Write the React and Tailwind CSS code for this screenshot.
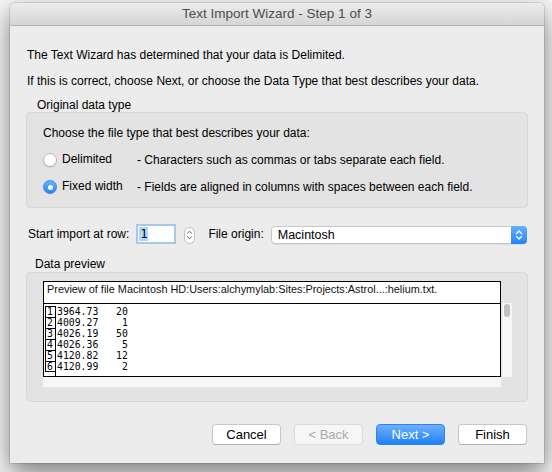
export default function App() {
  const rows = [
    ["1", "3964.73   20"],
    ["2", "4009.27    1"],
    ["3", "4026.19   50"],
    ["4", "4026.36    5"],
    ["5", "4120.82   12"],
    ["6", "4120.99    2"],
  ];
  return (
    <div className="w-[552px] h-[472px] bg-[#f6f6f6] overflow-hidden pt-[3px] pl-[10px] font-['Liberation_Sans',Arial,sans-serif] text-black">
      <div className="w-[534px] h-[460px] bg-[#ececec] rounded-t-[5px] shadow-[0_0_0_1px_rgba(0,0,0,0.1),0_10px_26px_rgba(0,0,0,0.5)] flex flex-col">
        <div className="h-[23px] shrink-0 rounded-t-[5px] bg-linear-to-b from-[#ececec] to-[#d5d5d5] border-b border-[#b3b3b3] flex items-center justify-center text-[13.5px] text-[#4d4d4d] pt-[1px]">
          Text Import Wizard - Step 1 of 3
        </div>
        <div className="px-[16px] flex flex-col text-[12px]">
          <div className="mt-[22px] leading-[15px] pl-[1px]">The Text Wizard has determined that your data is Delimited.</div>
          <div className="mt-[11px] leading-[15px] pl-[1px]">If this is correct, choose Next, or choose the Data Type that best describes your data.</div>
          <div className="mt-[9px] leading-[14px] ml-[11px]">Original data type</div>
          <div className="h-[96px] bg-[#e3e3e3] border border-[#d8d8d8] rounded-[4px] pt-[13px] pl-[16px]">
            <div className="leading-[15px]">Choose the file type that best describes your data:</div>
            <div className="mt-[10px] h-[18px] flex items-center">
              <div className="w-[94px] flex items-center">
                <div className="w-[14px] h-[14px] rounded-full bg-white border border-[#b4b4b4] shadow-[0_1px_1px_rgba(0,0,0,0.08)]"></div>
                <span className="ml-[5px] leading-[15px] -mt-[2px]">Delimited</span>
              </div>
              <span className="leading-[15px]">- Characters such as commas or tabs separate each field.</span>
            </div>
            <div className="mt-[9px] h-[18px] flex items-center">
              <div className="w-[94px] flex items-center">
                <div className="w-[14px] h-[14px] rounded-full bg-linear-to-b from-[#6cb2fb] to-[#1f86fb] border border-[#3a8ae8] flex items-center justify-center">
                  <div className="w-[5px] h-[5px] rounded-full bg-white"></div>
                </div>
                <span className="ml-[5px] leading-[15px] -mt-[2px]">Fixed width</span>
              </div>
              <span className="leading-[15px]">- Fields are aligned in columns with spaces between each field.</span>
            </div>
          </div>

          <div className="mt-[16px] h-[20px] flex items-center pl-[2px]">
            <span className="leading-[15px] mt-[1px]">Start import at row:</span>
            <div className="ml-[7px] w-[40px] h-[20px] bg-white border-[2px] border-[#a6c8ef] flex items-center pl-[1px]">
              <span className="bg-[#b4d5fe] px-[1px] h-[14px] leading-[14px] font-['DejaVu_Sans_Mono',monospace] text-[11.5px]">1</span>
            </div>
            <div className="ml-[8px] mt-[2px] w-[11px] h-[17px] bg-white border border-[#bdbdbd] rounded-full flex items-center justify-center">
              <svg width="7" height="12" viewBox="0 0 7 12" fill="none" stroke="#555" strokeWidth="1">
                <path d="M1.2 4.5 L3.5 2.2 L5.8 4.5" />
                <path d="M1.2 7.5 L3.5 9.8 L5.8 7.5" />
              </svg>
            </div>
            <span className="ml-[13px] leading-[15px] mt-[1px]">File origin:</span>
            <div className="ml-[7px] mt-[2px] flex-1 mr-[1px] h-[18px] bg-white border border-[#c8c8c8] rounded-[4px] flex items-center shadow-[0_1px_0_rgba(0,0,0,0.06)]">
              <span className="ml-[6px] flex-1 leading-[15px] text-[12.5px]">Macintosh</span>
              <div className="w-[16px] h-[18px] -mr-[1px] rounded-r-[4px] bg-linear-to-b from-[#67aefb] to-[#2183fb] flex items-center justify-center">
                <svg width="8" height="12" viewBox="0 0 8 12" fill="none" stroke="#fff" strokeWidth="1.4" strokeLinecap="round" strokeLinejoin="round">
                  <path d="M1.5 4.6 L4 2.1 L6.5 4.6" />
                  <path d="M1.5 7.4 L4 9.9 L6.5 7.4" />
                </svg>
              </div>
            </div>
          </div>

          <div className="mt-[13px] leading-[14px] ml-[9px]">Data preview</div>
          <div className="mt-[1px] h-[130px] bg-[#e3e3e3] border border-[#d8d8d8] rounded-[4px] pt-[8px] pl-[16px] flex items-start">
            <div className="w-[458px] flex flex-col">
              <div className="h-[23px] bg-white border border-black px-[3px] pt-[1px] leading-[13px] text-[10.9px] text-[#111]">
                Preview of file Macintosh HD:Users:alchymylab:Sites:Projects:Astrol...:helium.txt.
              </div>
              <div className="h-[73px] bg-white border-l border-r border-b border-black flex pt-[2px]">
                <div className="ml-[1px] w-[11px] border-r border-black flex flex-col">
                  {rows.map(([n], i) => (
                    <div
                      key={n}
                      className={
                        i === rows.length - 1
                          ? "h-[11px] border-t border-l border-b border-black leading-[9px] pl-[1px] font-['DejaVu_Sans_Mono',monospace] text-[9.8px]"
                          : "h-[11px] border-t border-l border-black leading-[10px] pl-[1px] font-['DejaVu_Sans_Mono',monospace] text-[9.8px]"
                      }
                    >
                      {n}
                    </div>
                  ))}
                </div>
                <div className="ml-[1px] flex flex-col font-['DejaVu_Sans_Mono',monospace] text-[9.8px]">
                  {rows.map(([n, t]) => (
                    <div key={n} className="h-[11px] leading-[11px] whitespace-pre">{t}</div>
                  ))}
                </div>
              </div>
              <div className="h-[10px] bg-[#f7f7f7]"></div>
            </div>
            <div className="ml-[1px] mt-[22px] w-[10px] h-[74px] bg-[#f6f6f6] flex justify-center pt-[1px]">
              <div className="w-[6px] h-[13px] rounded-full bg-[#c2c2c2]"></div>
            </div>
          </div>

          <div className="mt-[22px] h-[21px] flex justify-end gap-[13px] pr-[1px] text-[13px]">
            <div className="w-[69px] h-[21px] bg-white border border-[#c8c8c8] border-b-[#aeaeae] rounded-[4px] flex items-center justify-center leading-[15px]">Cancel</div>
            <div className="w-[69px] h-[21px] bg-[#f6f6f6] border border-[#dcdcdc] rounded-[4px] flex items-center justify-center leading-[15px] text-[#a9a9a9]">&lt; Back</div>
            <div className="w-[69px] h-[21px] bg-linear-to-b from-[#6bb0fb] to-[#1a80fb] border border-[#2f84ec] rounded-[4px] flex items-center justify-center leading-[15px] text-white">Next &gt;</div>
            <div className="w-[69px] h-[21px] bg-white border border-[#c8c8c8] border-b-[#aeaeae] rounded-[4px] flex items-center justify-center leading-[15px]">Finish</div>
          </div>
        </div>
      </div>
    </div>
  );
}
